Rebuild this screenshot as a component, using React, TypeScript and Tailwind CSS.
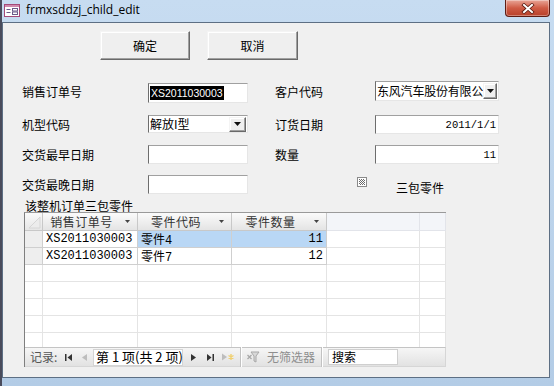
import React from 'react';

const zh = "font-['Noto_Sans_CJK_SC',sans-serif]";
const mono = "font-['Liberation_Mono','Noto_Sans_CJK_SC',monospace]";

const sunken =
  'bg-white border border-t-[#a0a0a0] border-l-[#6d6d6d] border-r-[#e6e6e6] border-b-[#e6e6e6] overflow-hidden flex items-center';
const raised =
  'bg-[#efefef] border border-t-[#f4f4f4] border-l-[#f4f4f4] border-r-[#696969] border-b-[#696969] shadow-[inset_-1px_-1px_0_#a0a0a0,inset_1px_1px_0_#ffffff]';

function FormIcon() {
  return (
    <svg width="16" height="13" viewBox="0 0 16 13">
      <rect x="0.5" y="0.5" width="15" height="12" fill="#fff" stroke="#a44a78" />
      <rect x="1" y="1" width="14" height="2" fill="#d08aae" />
      <rect x="2.5" y="5" width="4" height="1" fill="#6b5b8a" />
      <rect x="2.5" y="8" width="4" height="1" fill="#6b5b8a" />
      <rect x="8.5" y="4.5" width="5" height="2.5" fill="none" stroke="#6b5b8a" />
      <rect x="8.5" y="8" width="5" height="2.5" fill="none" stroke="#6b5b8a" />
    </svg>
  );
}

function CloseButton() {
  return (
    <div className="mr-[4px] w-[45px] h-[17px] rounded-b-[4px] border border-t-0 border-[#5e1d14] bg-gradient-to-b from-[#e8a597] via-[#cf5b45] to-[#b8402a] shadow-[inset_0_0_0_1px_rgba(255,255,255,0.35)] flex items-center justify-center">
      <svg width="14" height="11" viewBox="0 0 14 11">
        <path d="M3 2 L11 9 M11 2 L3 9" stroke="#5a1a10" strokeWidth="3.6" strokeLinecap="square" />
        <path d="M3 2 L11 9 M11 2 L3 9" stroke="#ffffff" strokeWidth="2" strokeLinecap="square" />
      </svg>
    </div>
  );
}

function DropArrow() {
  return (
    <svg width="7" height="4" viewBox="0 0 7 4">
      <path d="M0 0 H7 L3.5 4 Z" fill="#111" />
    </svg>
  );
}

function Label({ className, children }: { className: string; children: React.ReactNode }) {
  return <div className={`${zh} text-[12px] leading-[14px] text-black flex items-center whitespace-nowrap ${className}`}>{children}</div>;
}

function HeaderArrow() {
  return (
    <svg width="5" height="3" viewBox="0 0 5 3">
      <path d="M0 0 H5 L2.5 3 Z" fill="#444" />
    </svg>
  );
}

const rows = [
  { a: 'XS2011030003', b: '零件4', c: '11', sel: true },
  { a: 'XS2011030003', b: '零件7', c: '12', sel: false },
];

function Datasheet() {
  return (
    <div className="ml-[21px] w-[422px] h-[155px] flex flex-col border-l border-t border-l-[#7f7f7f] border-t-[#9a9a9a] bg-white">
      {/* header */}
      <div className={`flex h-[18px] ${zh} text-[12px] leading-[14px] text-[#333]`}>
        <div className="w-[18px] h-[18px] border-r border-b border-[#c8c8c8] bg-gradient-to-b from-[#fafafa] to-[#e6e6e6] flex items-center justify-center">
          <svg width="14" height="14" viewBox="0 0 14 14">
            <path d="M2 13 L13 2 L13 13 Z" fill="#ececec" stroke="#d6d6d6" />
          </svg>
        </div>
        {['销售订单号', '零件代码', '零件数量'].map((h, i) => (
          <div
            key={h}
            className={`${i === 1 ? 'w-[94px]' : 'w-[95px]'} h-[18px] border-r border-b border-r-[#c8c8c8] border-b-[#c8c8c8] bg-gradient-to-b from-[#fbfbfb] to-[#e4e4e4] flex items-center`}
          >
            <div className="flex-1 text-center tracking-[0.5px]">{h}</div>
            <div className="w-[14px] mr-[3px] flex justify-center">
              <HeaderArrow />
            </div>
          </div>
        ))}
        <div className="w-[93px] h-[18px] border-r border-b border-[#e2e4ea] bg-[#f3f5f9]" />
        <div className="w-[26px] h-[18px] border-r border-b border-[#e2e4ea] bg-[#f3f5f9]" />
      </div>

      {/* body */}
      <div className="flex-1 overflow-hidden">
        {rows.map((r, i) => (
          <div key={i} className={`flex h-[17px] ${mono} text-[12px] leading-[16px] text-black`}>
            <div className="w-[18px] h-[17px] border-r border-b border-[#cfcfcf] bg-[#eeeeee]" />
            <div className="w-[95px] h-[17px] border-r border-b border-[#cfcfcf] pl-[3px] whitespace-nowrap">{r.a}</div>
            <div className={`w-[94px] h-[17px] border-r border-b border-[#cfcfcf] pl-[3px] whitespace-nowrap ${r.sel ? 'bg-[#b9d7f5]' : ''}`}>
              <span className={zh}>{r.b.slice(0, 2)}</span>
              {r.b.slice(2)}
            </div>
            <div className={`w-[95px] h-[17px] border-r border-b border-[#cfcfcf] pr-[3px] text-right ${r.sel ? 'bg-[#b9d7f5]' : ''}`}>{r.c}</div>
            <div className="w-[93px] h-[17px] border-r border-b border-[#e4e4e4]" />
            <div className="w-[26px] h-[17px] border-r border-b border-[#e4e4e4]" />
          </div>
        ))}
        {[0, 1, 2, 3, 4, 5].map((i) => (
          <div key={i} className="flex h-[17px]">
            <div className="w-[18px] h-[17px] border-r border-b border-[#e4e4e4]" />
            <div className="w-[95px] h-[17px] border-r border-b border-[#e4e4e4]" />
            <div className="w-[94px] h-[17px] border-r border-b border-[#e4e4e4]" />
            <div className="w-[95px] h-[17px] border-r border-b border-[#e4e4e4]" />
            <div className="w-[93px] h-[17px] border-r border-b border-[#e4e4e4]" />
            <div className="w-[26px] h-[17px] border-r border-b border-[#e4e4e4]" />
          </div>
        ))}
      </div>

      {/* navigation bar */}
      <div className={`h-[20px] flex items-center border-t border-b border-t-[#c4c4c4] border-b-[#d6d6d6] border-r border-r-[#d6d6d6] bg-gradient-to-b from-[#f6f6f6] to-[#e2e2e2] ${zh} text-[12px] leading-[14px]`}>
        <div className="w-[35px] pl-[5px] text-[#555] whitespace-nowrap">记录:</div>
        <div className="w-[16px] flex justify-center">
          <svg width="7" height="7" viewBox="0 0 7 7">
            <rect x="0" y="0" width="1.5" height="7" fill="#333" />
            <path d="M7 0 L2.5 3.5 L7 7 Z" fill="#333" />
          </svg>
        </div>
        <div className="w-[17px] flex justify-center">
          <svg width="5" height="7" viewBox="0 0 5 7">
            <path d="M5 0 L0 3.5 L5 7 Z" fill="#bdbdbd" />
          </svg>
        </div>
        <div className="w-[90px] h-[17px] bg-white border border-[#d4d4d4] flex items-center pl-[2px] text-[13px] text-black whitespace-nowrap">
          第 1 项(共 2 项)
        </div>
        <div className="w-[20px] flex justify-center">
          <svg width="5" height="7" viewBox="0 0 5 7">
            <path d="M0 0 L5 3.5 L0 7 Z" fill="#333" />
          </svg>
        </div>
        <div className="w-[15px] flex justify-center">
          <svg width="7" height="7" viewBox="0 0 7 7">
            <path d="M0 0 L4.5 3.5 L0 7 Z" fill="#333" />
            <rect x="5.5" y="0" width="1.5" height="7" fill="#333" />
          </svg>
        </div>
        <div className="w-[20px] flex justify-center">
          <svg width="12" height="8" viewBox="0 0 12 8">
            <path d="M0 0.5 L5 4 L0 7.5 Z" fill="#bdbdbd" />
            <path d="M9 1 V7 M6.5 2.5 L11.5 5.5 M11.5 2.5 L6.5 5.5" stroke="#f0d070" strokeWidth="1.4" />
          </svg>
        </div>
        <div className="w-[2px]" />
        <div className="w-[2px] h-[20px] border-l border-l-[#c2c2c2] border-r border-r-[#ffffff]" />
        <div className="w-[20px] flex justify-center ml-[1px]">
          <svg width="13" height="12" viewBox="0 0 13 12">
            <path d="M4 1 H12 L9 5 V11 L7 10 V5 Z" fill="#d8d8d8" stroke="#a8a8a8" />
            <path d="M0.5 4 L4.5 8 M4.5 4 L0.5 8" stroke="#a8a8a8" strokeWidth="1.3" />
          </svg>
        </div>
        <div className="ml-[4px] w-[54px] text-[#8e8e8e] whitespace-nowrap">无筛选器</div>
        <div className="w-[2px] h-[20px] border-l border-l-[#c2c2c2] border-r border-r-[#ffffff]" />
        <div className="ml-[5px] w-[70px] h-[16px] bg-white border border-[#cfcfcf] pl-[3px] text-black flex items-center whitespace-nowrap">
          搜索
        </div>
      </div>
    </div>
  );
}

export default function App() {
  return (
    <div className="w-[554px] h-[386px] overflow-hidden flex flex-col border-l-2 border-l-[#4a4c5c] bg-gradient-to-b from-[#c7dcf1] to-[#b3cce6]">
      {/* title bar */}
      <div className="h-[22px] flex items-start">
        <div className="ml-[2px] mt-[4px]">
          <FormIcon />
        </div>
        <div className="ml-[6px] mt-[2px] font-['Open_Sans',sans-serif] text-[12px] leading-[16px] text-black">
          frmxsddzj_child_edit
        </div>
        <div className="flex-1" />
        <CloseButton />
      </div>

      {/* client area */}
      <div className="flex-1 flex pr-[4px] pb-[8px]">
        <div className="flex-1 border border-[#5d6f84] bg-[#f0f0f0] flex flex-col">
          {/* buttons */}
          <div className={`mt-[8px] ml-[97px] flex gap-[17px] ${zh} text-[12px] leading-[14px]`}>
            <button className={`${raised} w-[90px] h-[29px] text-black`}>确定</button>
            <button className={`${raised} w-[91px] h-[29px] text-black`}>取消</button>
          </div>

          {/* row A */}
          <div className="mt-[21px] flex items-start">
            <Label className="ml-[19px] w-[126px] h-[22px]">销售订单号</Label>
            <div className={`${sunken} mt-[2px] w-[100px] h-[20px] pl-[1px]`}>
              <span className="font-['Liberation_Sans',sans-serif] text-[10.5px] leading-[14px] bg-black text-white px-[1px]">XS2011030003</span>
            </div>
            <Label className="ml-[27px] w-[100px] h-[22px]">客户代码</Label>
            <div className={`${sunken} w-[124px] h-[20px] pl-[1px]`}>
              <div className={`flex-1 whitespace-nowrap ${zh} text-[12px] leading-[14px] tracking-[-0.2px]`}>东风汽车股份有限公</div>
              <div className={`${raised} w-[15px] h-[16px] mr-[1px] flex items-center justify-center`}>
                <DropArrow />
              </div>
            </div>
          </div>

          {/* row B */}
          <div className="mt-[12px] flex items-start">
            <Label className="ml-[19px] w-[126px] h-[19px]">机型代码</Label>
            <div className={`${sunken} w-[100px] h-[18px] pl-[1px]`}>
              <div className={`flex-1 whitespace-nowrap ${zh} text-[12px] leading-[14px]`}>解放I型</div>
              <div className={`${raised} w-[17px] h-[15px] mr-[1px] flex items-center justify-center`}>
                <DropArrow />
              </div>
            </div>
            <Label className="ml-[27px] w-[100px] h-[19px]">订货日期</Label>
            <div className={`${sunken} w-[124px] h-[19px] justify-end pr-[2px]`}>
              <span className={`${mono} text-[10.5px] leading-[14px]`}>2011/1/1</span>
            </div>
          </div>

          {/* row C */}
          <div className="mt-[11px] flex items-start">
            <Label className="ml-[19px] w-[126px] h-[19px]">交货最早日期</Label>
            <div className={`${sunken} w-[100px] h-[19px]`} />
            <Label className="ml-[27px] w-[100px] h-[19px]">数量</Label>
            <div className={`${sunken} w-[124px] h-[19px] justify-end pr-[2px]`}>
              <span className={`${mono} text-[10.5px] leading-[14px]`}>11</span>
            </div>
          </div>

          {/* row D */}
          <div className="mt-[11px] flex items-start">
            <Label className="ml-[19px] w-[126px] h-[19px]">交货最晚日期</Label>
            <div className={`${sunken} w-[100px] h-[19px]`} />
            <div className="ml-[109px] mt-[2px] w-[10px] h-[10px]">
              <svg width="10" height="10" viewBox="0 0 10 10">
                <defs>
                  <pattern id="chk" width="2" height="2" patternUnits="userSpaceOnUse">
                    <rect width="2" height="2" fill="#ffffff" />
                    <rect width="1" height="1" fill="#6a6a6a" />
                    <rect x="1" y="1" width="1" height="1" fill="#6a6a6a" />
                  </pattern>
                </defs>
                <rect x="0.5" y="0.5" width="9" height="9" fill="#ffffff" stroke="#8a8a8a" />
                <rect x="2" y="2" width="6" height="6" fill="url(#chk)" />
              </svg>
            </div>
            <Label className="ml-[29px] mt-[3px] h-[19px]">三包零件</Label>
          </div>

          {/* subform caption */}
          <div className={`mt-[2px] ml-[22px] h-[13px] ${zh} text-[12px] leading-[13px] text-black`}>该整机订单三包零件</div>

          <Datasheet />
        </div>
      </div>
    </div>
  );
}
